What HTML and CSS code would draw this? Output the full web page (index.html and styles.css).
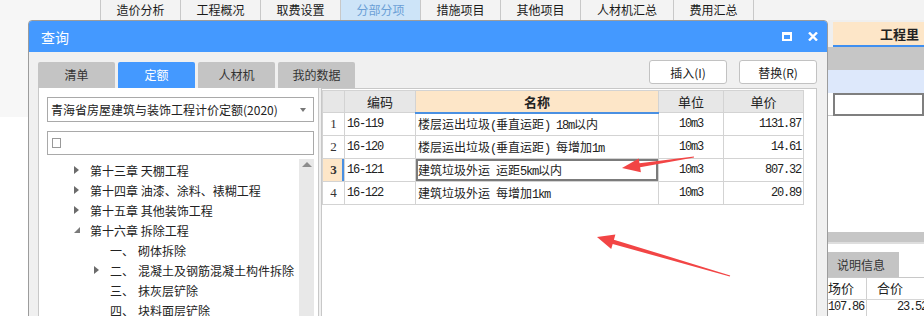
FILE: index.html
```html
<!DOCTYPE html>
<html>
	<head>
		<meta http-equiv="Content-Type" content="text/html;charset=UTF-8" />
		<title>查询</title>
		<link rel="stylesheet" href="styles.css">
	</head>
	<body>

		<div class="app">
			<div class="menubar">
				<div class="menu-lead"></div>
				<div class="menu-tab">造价分析</div>
				<div class="menu-tab">工程概况</div>
				<div class="menu-tab">取费设置</div>
				<div class="menu-tab on">分部分项</div>
				<div class="menu-tab">措施项目</div>
				<div class="menu-tab">其他项目</div>
				<div class="menu-tab wide">人材机汇总</div>
				<div class="menu-tab">费用汇总</div>
			</div>

			<div class="workspace">
				<div class="work-main">
					<div class="work-strip"></div>
				</div>
				<div class="work-side">
					<div class="side-head">
						<span class="side-rn"></span>
						<span class="side-title">工程里</span>
					</div>
					<div class="side-row grey"></div>
					<div class="side-row blue"></div>
					<div class="side-row edit">
						<span class="side-rn"></span>
						<span class="side-cell"></span>
					</div>
					<div class="side-fill"></div>
					<div class="side-band"></div>
					<div class="side-tabs">
						<span class="side-tab">说明信息</span>
					</div>
					<div class="side-grid">
						<div class="sg-row head">
							<span class="sg-a">场价</span>
							<span class="sg-b">合价</span>
						</div>
						<div class="sg-row data">
							<span class="sg-a m">107.86</span>
							<span class="sg-b num m">23.52</span>
						</div>
					</div>
				</div>
			</div>
		</div>

		<div class="dialog">
			<div class="dlg-title">
				<span class="dlg-name">查询</span>
				<span class="dlg-max"></span>
				<svg class="dlg-close" width="10" height="9" viewBox="0 0 10 9">
					<path d="M1 0.5 L9 8.5 M9 0.5 L1 8.5" stroke="#fff" stroke-width="2.4" fill="none" />
				</svg>
			</div>

			<div class="dlg-body">
				<div class="dlg-top">
					<div class="tabs">
						<span class="tab">清单</span>
						<span class="tab on">定额</span>
						<span class="tab">人材机</span>
						<span class="tab">我的数据</span>
					</div>
					<div class="actions">
						<button class="btn">插入(I)</button>
						<button class="btn">替换(R)</button>
					</div>
				</div>

				<div class="dlg-main">
					<div class="tree-pane">
						<div class="combo">
							<span>青海省房屋建筑与装饰工程计价定额(2020)</span>
							<span class="caret"></span>
						</div>
						<div class="search"><span class="box"></span></div>
						<div class="tree-wrap">
							<ul class="tree">
								<li class="node">第十三章 天棚工程</li>
								<li class="node">第十四章 油漆、涂料、裱糊工程</li>
								<li class="node">第十五章 其他装饰工程</li>
								<li class="node open">第十六章 拆除工程</li>
								<li class="node leaf sub"><span class="ord">一、</span>砌体拆除</li>
								<li class="node sub"><span class="ord">二、</span>混凝土及钢筋混凝土构件拆除</li>
								<li class="node leaf sub"><span class="ord">三、</span>抹灰层铲除</li>
								<li class="node leaf sub"><span class="ord">四、</span>块料面层铲除</li>
							</ul>
							<div class="vscroll"><span class="up"></span></div>
						</div>
					</div>

					<div class="grid-pane">
						<table class="grid">
							<colgroup>
								<col class="c-rn">
								<col class="c-code">
								<col class="c-name">
								<col class="c-unit">
								<col class="c-price">
							</colgroup>
							<tr>
								<th></th>
								<th>编码</th>
								<th class="name">名称</th>
								<th>单位</th>
								<th>单价</th>
							</tr>
							<tr>
								<td class="rn">1</td>
								<td class="code m">16-119</td>
								<td class="title">楼层运出垃圾<span class="m">(</span>垂直运距<span class="m">) 18m</span>以内</td>
								<td class="unit m">10m3</td>
								<td class="num m">1131.87</td>
							</tr>
							<tr>
								<td class="rn">2</td>
								<td class="code m">16-120</td>
								<td class="title">楼层运出垃圾<span class="m">(</span>垂直运距<span class="m">) </span>每增加<span class="m">1m</span></td>
								<td class="unit m">10m3</td>
								<td class="num m">14.61</td>
							</tr>
							<tr class="cur">
								<td class="rn">3</td>
								<td class="code m">16-121</td>
								<td class="title">建筑垃圾外运<span class="m"> </span>运距<span class="m">5km</span>以内</td>
								<td class="unit m">10m3</td>
								<td class="num m">807.32</td>
							</tr>
							<tr>
								<td class="rn">4</td>
								<td class="code m">16-122</td>
								<td class="title">建筑垃圾外运<span class="m"> </span>每增加<span class="m">1km</span></td>
								<td class="unit m">10m3</td>
								<td class="num m">20.89</td>
							</tr>
						</table>
					</div>
				</div>
			</div>
		</div>

		<svg class="marks" width="924" height="316" viewBox="0 0 924 316">
			<polygon points="622,168 638.7,158.4 639.5,163.3 693.9,156.4 694.1,157.6 640.1,167.3 640.9,172.2" />
			<polygon points="597,237 615.4,234.6 613.9,239.7 730.2,275.4 729.8,276.6 612.7,243.9 611.2,249" />
		</svg>

	</body>
</html>
```

FILE: styles.css
```css
* {
	box-sizing: border-box;
}

html, body {
	margin: 0;
	width: 924px;
	height: 316px;
	overflow: hidden;
	background: #fff;
	color: #222;
	font: 12px "Noto Sans CJK SC", "Noto Sans", sans-serif;
}

.m {
	font-family: "Liberation Mono", monospace;
	font-size: 12px;
	letter-spacing: -1.2px;
}

/* app behind the dialog */

.menubar {
	display: flex;
	height: 20px;
	background: #f3f3f3;
}

.menu-lead {
	width: 101px;
	background: #f6f6f6;
	border-right: 1px solid #c8c8c8;
}

.menu-tab {
	width: 80px;
	border-right: 1px solid #c8c8c8;
	line-height: 20px;
	text-align: center;
	color: #1a1a1a;
}

.menu-tab.wide {
	width: 93px;
}

.menu-tab.on {
	background: #cde4f8;
	color: #6b9fd6;
}

.workspace {
	display: flex;
	height: 296px;
}

.work-main {
	width: 828px;
}

.work-strip {
	height: 97px;
	background: #f7f7f7;
}

.work-side {
	flex: 1;
	display: flex;
	flex-direction: column;
	overflow: hidden;
}

.side-head {
	display: flex;
	height: 27px;
	background: #efefef;
}

.side-rn {
	width: 5px;
	flex: none;
}

.side-title {
	flex: 1;
	margin-top: 2px;
	padding-left: 47px;
	background: #fde6c8;
	border-bottom: 2px solid #3f8ff0;
	font-size: 13px;
	font-weight: bold;
	line-height: 23px;
}

.side-row {
	height: 23px;
	flex: none;
}

.side-row.grey {
	background: #c6c6c6;
}

.side-row.blue {
	background: #dde8fb;
}

.side-row.edit {
	display: flex;
}

.side-row.edit .side-rn {
	border-bottom: 1px solid #c8c8c8;
}

.side-cell {
	flex: 1;
	border: 2px solid #7f7f7f;
}

.side-fill {
	height: 116px;
	flex: none;
}

.side-band {
	height: 12px;
	flex: none;
	background: #c6c6c6;
	border-bottom: 2px solid #dedede;
}

.side-tabs {
	height: 33px;
	flex: none;
	padding-top: 8px;
}

.side-tab {
	display: block;
	width: 71px;
	height: 25px;
	padding-left: 9px;
	background: #c4c4c4;
	line-height: 25px;
	color: #333;
}

.sg-row {
	display: flex;
	height: 23px;
	line-height: 23px;
}

.sg-row.head {
	border-top: 1px solid #c8c8c8;
	border-bottom: 1px solid #d6d6d6;
	font-size: 13px;
	line-height: 20px;
}

.sg-row.data {
	line-height: 15px;
}

.sg-a {
	width: 38px;
	flex: none;
	white-space: nowrap;
	overflow: hidden;
}

.sg-b {
	flex: 1;
	padding-left: 10px;
	border-left: 1px solid #d0d0d0;
	white-space: nowrap;
}

.sg-b.num {
	padding-left: 30px;
}

/* dialog */

.dialog {
	position: absolute;
	left: 28px;
	top: 20px;
	width: 800px;
	height: 310px;
	border: 1px solid #9c9c9c;
	border-radius: 4px 4px 0 0;
	background: #f0f0f0;
	overflow: hidden;
}

.dlg-title {
	display: flex;
	align-items: center;
	height: 31px;
	padding: 0 9px 0 12px;
	background: #4499ff;
	color: #fff;
	font-size: 14px;
}

.dlg-max {
	width: 10px;
	height: 9px;
	margin-left: auto;
	border: 2px solid #fff;
	border-top-width: 3px;
}

.dlg-close {
	margin-left: 16px;
}

.dlg-body {
	padding: 0 10px 0 9px;
}

.dlg-top {
	display: flex;
	justify-content: space-between;
	height: 36px;
}

.tabs {
	display: flex;
	gap: 3px;
	margin-top: 10px;
}

.tab {
	width: 77px;
	height: 26px;
	border-radius: 2px 2px 0 0;
	background: #c4c4c4;
	color: #333;
	line-height: 26px;
	text-align: center;
}

.tab.on {
	background: #4499ff;
	color: #fff;
}

.actions {
	display: flex;
	gap: 12px;
	margin-top: 8px;
}

.btn {
	width: 78px;
	height: 24px;
	padding: 0;
	border: 1px solid #c2c2c2;
	border-radius: 3px;
	background: #fff;
	color: #222;
	font: 12px "Noto Sans CJK SC", "Noto Sans", sans-serif;
}

.dlg-main {
	display: flex;
	gap: 2px;
	height: 240px;
}

.tree-pane {
	width: 281px;
	display: flex;
	flex-direction: column;
	padding: 9px 4px 0 8px;
	background: #fff;
	border: 1px solid #c8c8c8;
	border-top: 0;
}

.combo {
	display: flex;
	align-items: center;
	height: 25px;
	padding-left: 3px;
	border: 1px solid #a9a9a9;
	white-space: nowrap;
}

.caret {
	margin-left: auto;
	margin-right: 7px;
	border-top: 4px solid #777;
	border-left: 3px solid transparent;
	border-right: 3px solid transparent;
}

.search {
	display: flex;
	align-items: center;
	height: 24px;
	margin-top: 9px;
	padding-left: 4px;
	border: 1px solid #a9a9a9;
}

.box {
	width: 9px;
	height: 10px;
	border: 1px solid #999;
}

.tree-wrap {
	flex: 1;
	display: flex;
	margin-top: 4px;
}

.tree {
	flex: 1;
	margin: 0;
	padding: 1px 0 0;
	list-style: none;
}

.node {
	display: flex;
	align-items: center;
	height: 20px;
	padding-left: 27px;
	white-space: nowrap;
}

.node::before {
	content: "";
	width: 0;
	height: 0;
	margin-right: 11px;
	border-left: 5px solid #6b6b6b;
	border-top: 4px solid transparent;
	border-bottom: 4px solid transparent;
}

.node.open::before {
	margin-right: 10px;
	border-top: 0;
	border-left: 6px solid transparent;
	border-bottom: 6px solid #7a7a7a;
}

.node.leaf::before {
	width: 16px;
	margin-right: 0;
	border: 0;
}

.node.sub {
	padding-left: 47px;
}

.ord {
	display: inline-block;
	width: 28px;
}

.vscroll {
	width: 15px;
	display: flex;
	justify-content: center;
	background: #e8e8e8;
}

.up {
	width: 0;
	height: 0;
	margin-top: 3px;
	border-bottom: 5px solid #8c8c8c;
	border-left: 5px solid transparent;
	border-right: 5px solid transparent;
}

.grid-pane {
	flex: 1;
	padding-top: 1px;
	background: #fff;
	border: 1px solid #c8c8c8;
}

.grid {
	width: 481px;
	border-collapse: collapse;
	table-layout: fixed;
}

.c-rn { width: 22px; }
.c-code { width: 71px; }
.c-name { width: 243px; }
.c-unit { width: 65px; }
.c-price { width: 80px; }

.grid th,
.grid td {
	height: 23px;
	padding: 0 2px;
	border: 1px solid #d3d3d3;
	white-space: nowrap;
	overflow: hidden;
}

.grid th {
	height: 22px;
	background: #e7e7e7;
	font-size: 13px;
	font-weight: normal;
	text-align: center;
}

.grid th.name {
	background: #fde6c8;
	border-bottom: 2px solid #4a90e2;
	font-weight: bold;
}

.grid td.rn {
	padding: 0;
	text-align: center;
	color: #333;
	font-family: "Liberation Serif", serif;
	font-size: 13px;
}

.grid td.unit {
	text-align: center;
}

.grid td.num {
	text-align: right;
	padding-right: 2px;
}

.grid tr.cur td.rn {
	background: #fde6c8;
	font-weight: bold;
	box-shadow: inset -2px 0 0 #4a90e2;
}

.grid tr.cur td.title {
	box-shadow: inset 0 0 0 2px #7b7b7b;
}

/* annotation arrows */

.marks {
	position: absolute;
	left: 0;
	top: 0;
	pointer-events: none;
}

.marks polygon {
	fill: #f24545;
}
```
